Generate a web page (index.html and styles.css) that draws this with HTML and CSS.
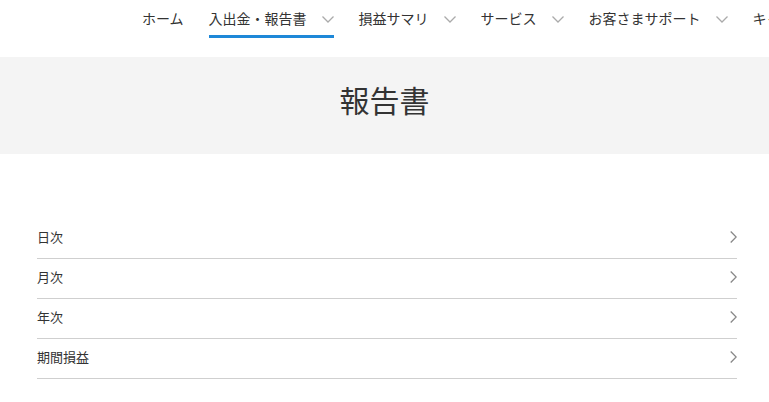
FILE: index.html
```html
<!DOCTYPE html>
<html lang="ja">
<head>
<meta charset="utf-8">
<title>報告書</title>
<link rel="stylesheet" href="styles.css">
</head>
<body>
<header class="site-header">
  <nav class="gnav">
    <a class="gnav-item" href="#">ホーム</a>
    <a class="gnav-item is-active" href="#">入出金・報告書<svg class="caret" width="12" height="7" viewBox="0 0 12 7"><path d="M0.5 0.5 L6 6 L11.5 0.5" fill="none" stroke="#aaa" stroke-width="1.3"/></svg></a>
    <a class="gnav-item" href="#">損益サマリ<svg class="caret" width="12" height="7" viewBox="0 0 12 7"><path d="M0.5 0.5 L6 6 L11.5 0.5" fill="none" stroke="#aaa" stroke-width="1.3"/></svg></a>
    <a class="gnav-item" href="#">サービス<svg class="caret" width="12" height="7" viewBox="0 0 12 7"><path d="M0.5 0.5 L6 6 L11.5 0.5" fill="none" stroke="#aaa" stroke-width="1.3"/></svg></a>
    <a class="gnav-item" href="#">お客さまサポート<svg class="caret" width="12" height="7" viewBox="0 0 12 7"><path d="M0.5 0.5 L6 6 L11.5 0.5" fill="none" stroke="#aaa" stroke-width="1.3"/></svg></a>
    <a class="gnav-item" href="#">キャンペーン</a>
  </nav>
</header>
<section class="page-title">
  <h1>報告書</h1>
</section>
<ul class="report-list">
  <li><a href="#"><span>日次</span><svg class="arrow" width="7" height="12" viewBox="0 0 7 12"><path d="M0.7 0.5 L6.2 6 L0.7 11.5" fill="none" stroke="#888" stroke-width="1.3"/></svg></a></li>
  <li><a href="#"><span>月次</span><svg class="arrow" width="7" height="12" viewBox="0 0 7 12"><path d="M0.7 0.5 L6.2 6 L0.7 11.5" fill="none" stroke="#888" stroke-width="1.3"/></svg></a></li>
  <li><a href="#"><span>年次</span><svg class="arrow" width="7" height="12" viewBox="0 0 7 12"><path d="M0.7 0.5 L6.2 6 L0.7 11.5" fill="none" stroke="#888" stroke-width="1.3"/></svg></a></li>
  <li><a href="#"><span>期間損益</span><svg class="arrow" width="7" height="12" viewBox="0 0 7 12"><path d="M0.7 0.5 L6.2 6 L0.7 11.5" fill="none" stroke="#888" stroke-width="1.3"/></svg></a></li>
</ul>
</body>
</html>
```
FILE: styles.css
```css
* { box-sizing: border-box; }
html, body {
  margin: 0;
  padding: 0;
  background: #fff;
  color: #333;
  font-family: "Noto Sans CJK JP", "Noto Sans", sans-serif;
  overflow: hidden;
}
a { color: inherit; text-decoration: none; }

.site-header {
  height: 57px;
  overflow: hidden;
}
.gnav {
  display: flex;
  gap: 25px;
  padding-left: 142px;
  white-space: nowrap;
}
.gnav-item {
  display: flex;
  align-items: center;
  flex-shrink: 0;
  font-size: 14px;
  line-height: 20px;
  padding-top: 8px;
  padding-bottom: 7px;
  border-bottom: 3px solid transparent;
  color: #333;
}
.gnav-item.is-active {
  border-bottom-color: #1e88d8;
}
.caret {
  margin-left: 15px;
  margin-top: 3px;
}

.page-title {
  height: 97px;
  padding-bottom: 14px;
  background: #f4f4f4;
  display: flex;
  align-items: center;
  justify-content: center;
}
.page-title h1 {
  margin: 0;
  font-size: 30px;
  font-weight: normal;
  line-height: 40px;
  color: #333;
}

.report-list {
  list-style: none;
  margin: 65px 0 0 37px;
  padding: 0;
  width: 700px;
}
.report-list li {
  border-bottom: 1px solid #cfcfcf;
}
.report-list a {
  display: flex;
  align-items: center;
  justify-content: space-between;
  height: 39px;
  padding-bottom: 5px;
  font-size: 13px;
  color: #333;
}
.arrow { margin-top: 1px; }
```
